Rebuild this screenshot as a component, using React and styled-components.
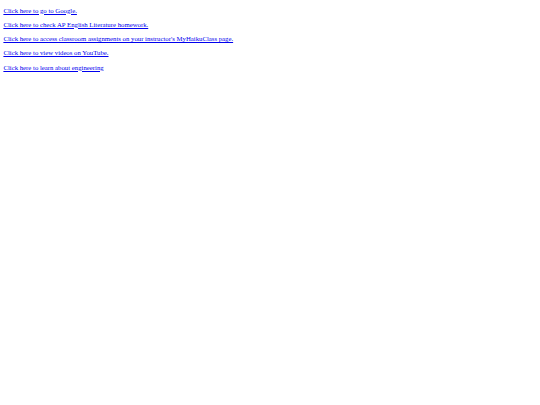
import React from 'react';
import styled, { createGlobalStyle } from 'styled-components';

const GlobalStyle = createGlobalStyle`
  body {
    margin: 0;
    background: #ffffff;
    font-family: "Liberation Serif", "Times New Roman", serif;
  }
`;

const Page = styled.div`
  display: flex;
  flex-direction: column;
  align-items: flex-start;
  gap: 6.25px;
  padding: 6.5px 3.4px;
`;

const Item = styled.p`
  margin: 0;
  font-size: 6.75px;
  line-height: 8px;
`;

const Link = styled.a`
  color: #0000ee;
  text-decoration: underline;
`;

const links = [
  'Click here to go to Google.',
  'Click here to check AP English Literature homework.',
  "Click here to access classroom assignments on your instructor's MyHaikuClass page.",
  'Click here to view videos on YouTube.',
  'Click here to learn about engineering',
];

const App = () => {
  return (
    <>
      <GlobalStyle />
      <Page>
        {links.map((text) => (
          <Item key={text}>
            <Link href='#'>{text}</Link>
          </Item>
        ))}
      </Page>
    </>
  );
};

export default App;
